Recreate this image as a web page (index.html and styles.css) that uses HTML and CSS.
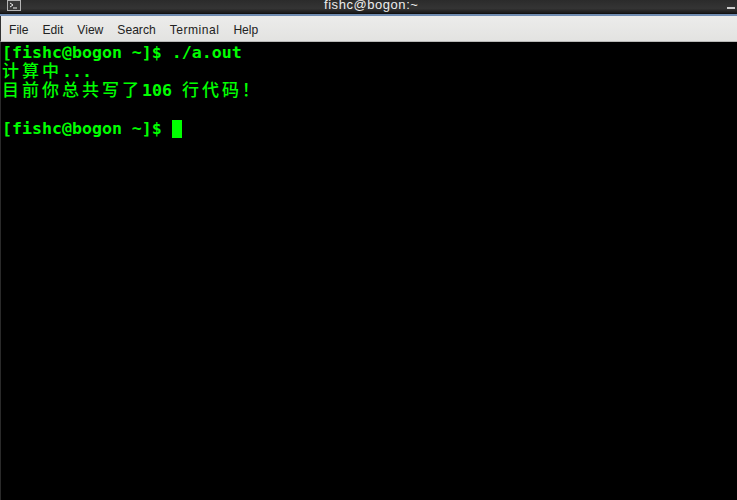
FILE: index.html
```html
<!DOCTYPE html>
<html lang="zh">
<head>
<meta charset="utf-8">
<title>fishc@bogon:~</title>
<link rel="stylesheet" href="styles.css">
</head>
<body>
<div class="window">
  <header class="titlebar">
    <span class="app-icon">
      <svg width="14" height="12" viewBox="0 0 14 12"><rect x="0.5" y="0.5" width="13" height="10" fill="#3a3a3a" stroke="#b5b5b5"/><path d="M3 3l3 2-3 2M6 8h4" fill="none" stroke="#eee" stroke-width="1"/></svg>
    </span>
    <span class="title">fishc@bogon:~</span>
    <span class="minimize"></span>
  </header>
  <nav class="menubar">
    <span class="menu-item">File</span>
    <span class="menu-item">Edit</span>
    <span class="menu-item">View</span>
    <span class="menu-item">Search</span>
    <span class="menu-item menu-item-wide">Terminal</span>
    <span class="menu-item">Help</span>
  </nav>
  <main class="terminal">
    <div class="line">[fishc@bogon ~]$ ./a.out</div>
    <div class="line"><span class="cjk">计算中</span>...</div>
    <div class="line"><span class="cjk">目前你总共写了</span>106 <span class="cjk">行代码！</span></div>
    <div class="line">&nbsp;</div>
    <div class="line">[fishc@bogon ~]$ <span class="cursor"></span></div>
  </main>
</div>
</body>
</html>
```
FILE: styles.css
```css
* { box-sizing: border-box; }
html, body { margin: 0; padding: 0; background: #000; }
.window { width: 737px; height: 500px; display: flex; flex-direction: column; overflow: hidden; }
.titlebar {
  height: 16px; flex: none; display: flex; align-items: flex-start; position: relative;
  background: linear-gradient(#2b2b2b, #343434 60%, #1c1c1c 90%);
  border-bottom: 2px solid #6f8bb0;
  box-shadow: inset 0 -1px 0 #111;
  color: #e8e8e8;
}
.app-icon { display: flex; margin: 0 0 0 7px; height: 12px; }
.title {
  position: absolute; left: 324px; top: -1px; line-height: 12px;
  font-family: "Liberation Sans", sans-serif; font-size: 13px; letter-spacing: 0.55px; color: #ececec;
}
.minimize { position: absolute; right: 2px; top: 7px; width: 8px; height: 2px; background: #ccc; }
.menubar {
  height: 26px; flex: none; display: flex; gap: 14px; align-items: center;
  padding: 2px 0 0 8px;
  background: linear-gradient(#ececeb, #e3e3e1);
  border-bottom: 1px solid #b8b8b6;
  border-left: 1px solid #333;
  font: 12.1px "Liberation Sans", sans-serif; color: #222;
}
.menu-item-wide { letter-spacing: 0.5px; }
.terminal {
  flex: 1; background: #000; color: #00ff00; padding: 1px 0 0 1px;
  font: bold 16.6px/19px "DejaVu Sans Mono", "Noto Sans CJK SC", monospace;
  border-left: 1px solid #2a2a2a;
}
.line { height: 19px; white-space: pre; }
.cjk { display: inline-block; line-height: 15px; font-family: "Noto Sans CJK SC", monospace; font-size: 17px; font-weight: 500; letter-spacing: 3px; }
.cursor { display: inline-block; width: 10px; height: 18px; background: #00ff00; vertical-align: -4px; }
```
